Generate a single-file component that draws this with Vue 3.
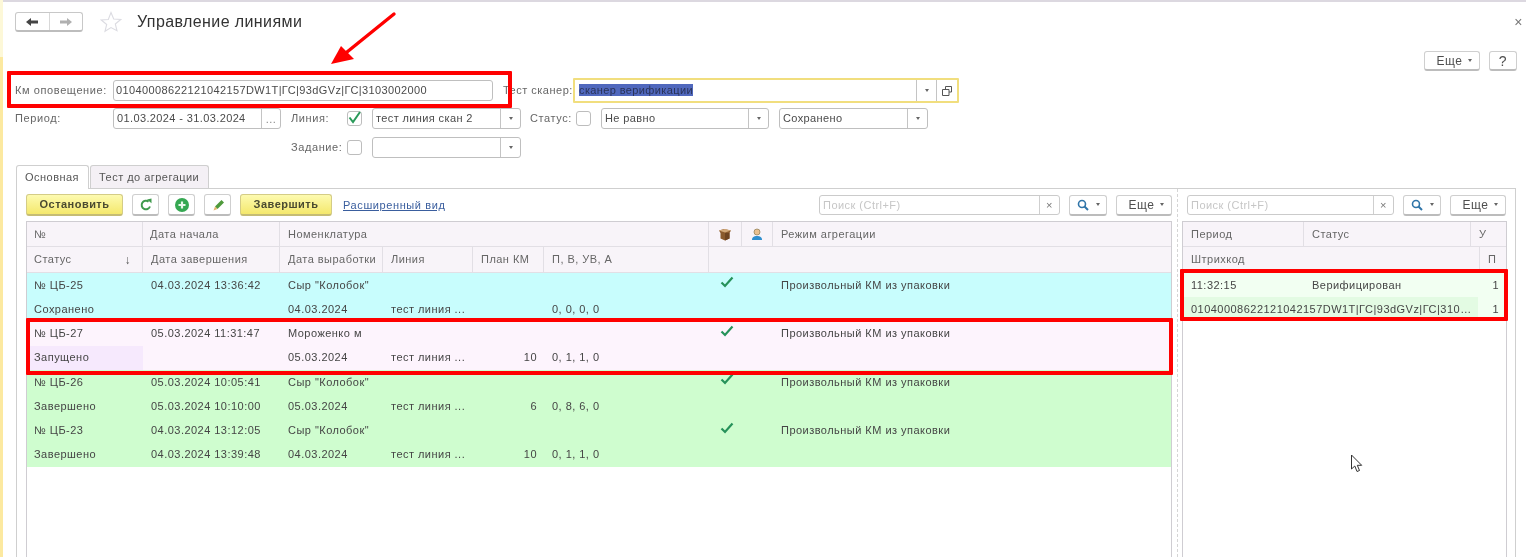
<script setup>
const rows = [
  { cls: 'cyan', num: '№ ЦБ-25', status: 'Сохранено', start: '04.03.2024 13:36:42', end: '', name: 'Сыр "Колобок"', date: '04.03.2024', plan: '', counts: '0, 0, 0, 0' },
  { cls: 'lilac', num: '№ ЦБ-27', status: 'Запущено', start: '05.03.2024 11:31:47', end: '', name: 'Мороженко м', date: '05.03.2024', plan: '10', counts: '0, 1, 1, 0' },
  { cls: 'green', num: '№ ЦБ-26', status: 'Завершено', start: '05.03.2024 10:05:41', end: '05.03.2024 10:10:00', name: 'Сыр "Колобок"', date: '05.03.2024', plan: '6', counts: '0, 8, 6, 0' },
  { cls: 'green', num: '№ ЦБ-23', status: 'Завершено', start: '04.03.2024 13:12:05', end: '04.03.2024 13:39:48', name: 'Сыр "Колобок"', date: '04.03.2024', plan: '10', counts: '0, 1, 1, 0' }
]
</script>

<template>
  <div class="page">
    <div class="topstrip"></div>
    <header class="head">
      <div class="navgroup">
        <span class="navbtn"><svg width="14" height="10" viewBox="0 0 14 10"><path d="M1 5 6 1v2.500h7v3H6V9z" fill="#444"/></svg></span>
        <span class="navbtn"><svg width="14" height="10" viewBox="0 0 14 10"><path d="M13 5 8 1v2.500H1v3h7V9z" fill="#b0b0b0"/></svg></span>
      </div>
      <svg class="star" width="22" height="22" viewBox="0 0 22 22"><path d="M11 1.500l2.700 6.500 7 .5-5.400 4.500 1.700 6.800L11 16.600 5 20.300l1.700-6.800L1.300 9l7-.5z" fill="#fff" stroke="#dcdce2" stroke-width="1.100"/></svg>
      <h1 class="title">Управление линиями</h1>
      <span class="close">×</span>
    </header>

    <div class="cmdbar">
      <button class="btn more-top">Еще <i class="caret"></i></button>
      <button class="btn help">?</button>
    </div>

    <div class="frow r1">
      <label class="lab l-km">Км оповещение:</label>
      <div class="inp w-km">01040008622121042157DW1T|ГС|93dGVz|ГС|3103002000</div>
      <label class="lab l-scan">Тест сканер:</label>
      <div class="inp focus">
        <span class="fieldtext"><span class="sel">сканер верификации</span></span>
        <span class="seg s-drop"><i class="caret"></i></span>
        <span class="seg s-open"><svg width="10" height="10" viewBox="0 0 10 10"><path d="M3.500 3V.5h6v5.500H7M.5 3.500H7v6H.5z" fill="none" stroke="#555"/></svg></span>
      </div>
    </div>

    <div class="frow r2">
      <label class="lab l-km">Период:</label>
      <div class="inp w-period"><span class="fieldtext">01.03.2024 - 31.03.2024</span><span class="seg s-dots">...</span></div>
      <label class="lab l-line">Линия:</label>
      <span class="chk"><svg width="16" height="14" viewBox="0 0 16 14"><path d="M2.500 6.500 6 11l7-10" fill="none" stroke="#2a9a5a" stroke-width="2"/></svg></span>
      <div class="inp w-combo"><span class="fieldtext">тест линия скан 2</span><span class="seg s-drop"><i class="caret"></i></span></div>
      <label class="lab l-status">Статус:</label>
      <span class="chk c-status"></span>
      <div class="inp w-cmb2"><span class="fieldtext">Не равно</span><span class="seg s-drop"><i class="caret"></i></span></div>
      <div class="inp w-cmb2 gap-cmb"><span class="fieldtext">Сохранено</span><span class="seg s-drop"><i class="caret"></i></span></div>
    </div>

    <div class="frow r3">
      <label class="lab l-task">Задание:</label>
      <span class="chk"></span>
      <div class="inp w-combo"><span class="fieldtext"></span><span class="seg s-drop"><i class="caret"></i></span></div>
    </div>

    <div class="tabs">
      <span class="tab active">Основная</span>
      <span class="tab">Тест до агрегации</span>
    </div>

    <section class="panel">
      <div class="leftcol">
        <div class="toolbar">
          <button class="btn yellow b-stop">Остановить</button>
          <button class="btn icon">
            <svg width="14" height="14" viewBox="0 0 14 14"><path d="M11 8.500A4.300 4.300 0 1 1 9.600 3.600" fill="none" stroke="#3f9a4c" stroke-width="2"/><path d="M8 1.500l4.500-1v4.800z" fill="#3f9a4c"/></svg>
          </button>
          <button class="btn icon">
            <svg width="16" height="16" viewBox="0 0 16 16"><circle cx="8" cy="8" r="7" fill="#35a852"/><path d="M8 4.500v7M4.500 8h7" stroke="#e8f8ea" stroke-width="2.200"/></svg>
          </button>
          <button class="btn icon">
            <svg width="14" height="14" viewBox="0 0 14 14"><path d="M4 8.500 10.500 2l2.500 2.500L6.500 11z" fill="#4f9a3c"/><path d="M4 8.500 2.500 12.500 6.500 11z" fill="#e3b56c"/></svg>
          </button>
          <button class="btn yellow b-finish">Завершить</button>
          <a class="link">Расширенный вид</a>
          <span class="spring"></span>
          <div class="search sw-left"><span class="ph">Поиск (Ctrl+F)</span><span class="x">×</span></div>
          <button class="btn find">
            <svg width="12" height="12" viewBox="0 0 12 12"><circle cx="5" cy="5" r="3.500" fill="none" stroke="#2f74a8" stroke-width="1.600"/><path d="M7.500 7.500 11 11" stroke="#2f74a8" stroke-width="2"/></svg><i class="caret"></i>
          </button>
          <button class="btn more">Еще <i class="caret"></i></button>
        </div>

        <div class="table main">
          <div class="hrow hmain">
            <div class="hc c1">№</div>
            <div class="hc c2">Дата начала</div>
            <div class="hc c3">Номенклатура</div>
            <div class="hc c4 ic">
              <svg width="14" height="13" viewBox="0 0 14 13"><path d="M1 2.500 6 1l7 1.500-1.500 2.500v5.500L7 12.500l-4.500-2V5z" fill="#8a5a2c"/><path d="M1 2.500 7 4.500 13 2.500 7 1z" fill="#d2a878"/><path d="M7 5v7.500l4.500-2V5z" fill="#6e4420"/></svg>
            </div>
            <div class="hc c5 ic">
              <svg width="12" height="13" viewBox="0 0 12 13"><circle cx="6" cy="4" r="3" fill="#e9c08f" stroke="#8a7a50" stroke-width=".7"/><path d="M1 12c0-3 2-4 5-4s5 1 5 4z" fill="#2f8fcf"/></svg>
            </div>
            <div class="hc c6">Режим агрегации</div>
          </div>
          <div class="hrow hsub">
            <div class="hc d1">Статус <span class="sort">↓</span></div>
            <div class="hc d2">Дата завершения</div>
            <div class="hc d3">Дата выработки</div>
            <div class="hc d4">Линия</div>
            <div class="hc d5">План КМ</div>
            <div class="hc d6">П, В, УВ, А</div>
            <div class="hc d7"></div>
          </div>
          <div v-for="r in rows" :key="r.num" class="drow" :class="r.cls">
            <div class="dc a1">{{ r.num }}</div>
            <div class="dc a2">{{ r.start }}</div>
            <div class="dc a3">{{ r.name }}</div>
            <div class="dc a4"><svg width="14" height="12" viewBox="0 0 14 12"><path d="M1.500 6.500 5 10 12.500 1.500" fill="none" stroke="#26925a" stroke-width="2.200"/></svg></div>
            <div class="dc a5"></div>
            <div class="dc a6">Произвольный КМ из упаковки</div>
            <div class="dc b1 st">{{ r.status }}</div>
            <div class="dc b2">{{ r.end }}</div>
            <div class="dc b3">{{ r.date }}</div>
            <div class="dc b4">тест линия ...</div>
            <div class="dc b5">{{ r.plan }}</div>
            <div class="dc b6">{{ r.counts }}</div>
            <div class="dc b7"></div>
          </div>
        </div>
      </div>

      <div class="splitter"></div>

      <div class="rightcol">
        <div class="toolbar tb-right">
          <div class="search sw-right"><span class="ph">Поиск (Ctrl+F)</span><span class="x">×</span></div>
          <button class="btn find">
            <svg width="12" height="12" viewBox="0 0 12 12"><circle cx="5" cy="5" r="3.500" fill="none" stroke="#2f74a8" stroke-width="1.600"/><path d="M7.500 7.500 11 11" stroke="#2f74a8" stroke-width="2"/></svg><i class="caret"></i>
          </button>
          <button class="btn more">Еще <i class="caret"></i></button>
        </div>
        <div class="table side">
          <div class="shead s1">
            <div class="hc">Период</div><div class="hc">Статус</div><div class="hc">У</div>
          </div>
          <div class="shead s2">
            <div class="hc">Штрихкод</div><div class="hc">П</div>
          </div>
          <div class="srow r-a">
            <div class="dc">11:32:15</div><div class="dc">Верифицирован</div><div class="dc num">1</div>
          </div>
          <div class="srow r-b">
            <div class="dc code"><span class="codetext">01040008622121042157DW1T|ГС|93dGVz|ГС|310…</span></div><div class="dc num">1</div>
          </div>
        </div>
      </div>
    </section>

    <div class="mark m-km"></div>
    <div class="mark m-row"></div>
    <div class="mark m-side"></div>
    <svg class="arrow" width="70" height="60" viewBox="0 0 70 60"><path d="M65 3 18 41" stroke="#f00" stroke-width="3.400" stroke-linecap="round"/><path d="M2 53 12 35 25 48z" fill="#f00"/></svg>
    <svg class="cursor" width="14" height="20" viewBox="0 0 14 20"><path d="M1.500 1v14l3.300-3 2.200 5.500 2.500-1-2.200-5.200h4.400z" fill="#fff" stroke="#333" stroke-width="1"/></svg>
  </div>
</template>

<style>
html, body { margin: 0; background: #fff; }
</style>

<style scoped>
.page {
  position: relative;
  width: 1526px;
  height: 557px;
  overflow: hidden;
  box-sizing: border-box;
  border-left: 3px solid #fce9a0;
  border-image: linear-gradient(#fdf8d8 58px, #fce9a0 58px) 1;
  background: #fff;
  font: 11px/1 "Liberation Sans", Arial, sans-serif;
  letter-spacing: .47px;
  color: #4e4e4e;
  filter: blur(.4px);
}
.topstrip { height: 2px; background: #dcd8e0; margin-left: -3px; }
.head { display: flex; align-items: center; height: 20px; margin: 10px 0 0 12px; }
.navgroup { display: flex; width: 68px; height: 20px; box-sizing: border-box; border: 1px solid #c8c8c8; border-bottom: 2px solid #bdbdbd; border-radius: 3px; }
.navbtn { flex: 1; display: flex; align-items: center; justify-content: center; }
.navbtn + .navbtn { border-left: 1px solid #d8d8d8; }
.star { margin-left: 17px; }
.title { margin: 0 0 0 15px; font: 400 16px/20px "Liberation Sans", Arial, sans-serif; letter-spacing: .4px; color: #333; }
.close { margin-left: auto; margin-right: 3px; font-size: 14px; color: #777; }

.cmdbar { display: flex; justify-content: flex-end; gap: 9px; height: 20px; margin: 19px 9px 0 0; }
.btn {
  box-sizing: border-box; height: 20px; padding: 0; display: inline-flex; align-items: center; justify-content: center;
  background: #fff; border: 1px solid #cfcfcf; border-bottom: 2px solid #bcbcbc; border-radius: 3px;
  font: inherit; letter-spacing: inherit; color: #4e4e4e;
}
.more-top, .more { font-size: 12px; padding-left: 5px; }
.more-top { width: 56px; gap: 6px; }
.help { width: 28px; font-size: 14px; }
.caret { display: inline-block; width: 0; height: 0; border: 2.500px solid transparent; border-top: 3px solid #666; border-bottom: 0; }

.frow { display: flex; align-items: center; }
.r1 { height: 25px; margin-top: 7px; }
.r2 { height: 21px; margin-top: 5px; }
.r3 { height: 21px; margin-top: 8px; padding-left: 288px; }
.lab { color: #666; white-space: nowrap; flex: none; letter-spacing: .6px; }
.l-km { width: 98px; margin-left: 12px; }
.l-scan { width: 70px; margin-left: 10px; letter-spacing: .5px; }
.l-line { width: 56px; margin-left: 10px; }
.l-status { width: 46px; margin-left: 9px; }
.l-task { width: 56px; }
.inp {
  box-sizing: border-box; height: 21px; display: flex; align-items: center; flex: none;
  border: 1px solid #bfbfbf; border-radius: 3px; padding-left: 2px; background: #fff; color: #4a4a4a; white-space: nowrap; letter-spacing: .38px;
}
.w-km { width: 380px; }
.focus { width: 386px; height: 25px; border: 2px solid #f1de7e; border-radius: 1px; }
.w-period { width: 168px; }
.w-combo { width: 149px; }
.w-cmb2 { width: 168px; margin-left: 0; }
.w-cmb2:last-child { width: 149px; }
.gap-cmb { margin-left: 10px; }
.fieldtext { flex: 1; padding-left: 1px; min-width: 0; }
.focus .fieldtext { padding-left: 2px; }
.sel { background: #5068bd; color: #2a3358; }
.seg { flex: none; height: 100%; display: flex; align-items: center; justify-content: center; border-left: 1px solid #c4c4c4; }
.s-drop { width: 19px; }
.s-open { width: 20px; }
.s-dots { width: 19px; color: #888; align-items: flex-end; padding-bottom: 3px; box-sizing: border-box; }
.chk { box-sizing: border-box; width: 15px; height: 15px; margin-right: 10px; flex: none; border: 1px solid #bdbdbd; border-radius: 3px; display: flex; align-items: center; justify-content: center; }
.chk svg { flex: none; margin-top: -2px; }
.c-status { margin-right: 10px; }

.tabs { display: flex; gap: 1px; height: 23px; margin: 7px 0 0 13px; }
.tab { box-sizing: border-box; height: 23px; padding: 0 8px; display: flex; align-items: center; white-space: nowrap; border: 1px solid #cfcfcf; border-bottom: 0; border-radius: 3px 3px 0 0; background: #f4f0f5; color: #555; }
.tab.active { width: 73px; background: #fff; height: 24px; position: relative; z-index: 1; }
.tab:not(.active) { width: 119px; }

.panel { display: flex; box-sizing: border-box; width: 1500px; height: 369px; margin-left: 13px; padding-left: 9px; border: 1px solid #cfcfcf; border-bottom: 0; }
.leftcol { width: 1146px; flex: none; }
.rightcol { width: 325px; flex: none; }
.splitter { width: 0; margin-left: 5px; margin-right: 4px; border-left: 1px dashed #d5d5d5; }
.toolbar { display: flex; align-items: center; gap: 9px; height: 32px; }
.yellow { height: 22px; background: linear-gradient(#fdfab0, #f4e86c); border-color: #d4cc86; border-bottom-color: #c5bc74; font-weight: 700; color: #4a4a30; }
.b-stop { width: 97px; }
.b-finish { width: 92px; }
.icon { width: 27px; height: 22px; }
.link { margin-left: 2px; color: #3a5e9e; text-decoration: underline; width: 102px; white-space: nowrap; letter-spacing: .6px; }
.spring { flex: 1; }
.search { box-sizing: border-box; display: flex; align-items: center; height: 20px; border: 1px solid #cbcbcb; border-radius: 3px; padding-left: 3px; }
.sw-left { width: 241px; }
.sw-right { width: 207px; margin-left: 5px; }
.ph { flex: 1; color: #c6c6c6; white-space: nowrap; }
.x { width: 19px; height: 100%; display: flex; align-items: center; justify-content: center; border-left: 1px solid #cfcfcf; color: #777; }
.find { width: 38px; gap: 7px; height: 21px; }
.more { width: 56px; gap: 6px; height: 21px; }
.tb-right { justify-content: flex-start; }

.table { box-sizing: border-box; height: 337px; border: 1px solid #cfcdd2; border-bottom: 0; overflow: hidden; }
.hrow, .drow { display: grid; grid-template-columns: 116px 137px 103px 90px 71px 165px 33px 31px 1fr; }
.hc { box-sizing: border-box; display: flex; align-items: center; padding-left: 7px; background: #f8f4f9; color: #666; border-right: 1px solid #e2dfe5; border-bottom: 1px solid #e2dfe5; white-space: nowrap; }
.hmain .hc { height: 25px; }
.hsub .hc { height: 26px; }
.c1 { grid-column: 1; } .c2 { grid-column: 2; }
.c3 { grid-column: 3 / span 4; padding-left: 8px; }
.c4 { grid-column: 7; } .c5 { grid-column: 8; }
.c6 { grid-column: 9; border-right: 0; padding-left: 8px; }
.ic { justify-content: center; padding-left: 0; }
.d1 { position: relative; }
.sort { position: absolute; right: 11px; color: #555; font-size: 12px; }
.d2, .d3, .d4, .d5, .d6 { padding-left: 8px; }
.d6 { grid-column: 6; }
.d7 { grid-column: 7 / -1; border-right: 0; }
.drow { grid-template-rows: 24.250px 24.250px; align-items: stretch; }
.dc { box-sizing: border-box; display: flex; align-items: center; padding-left: 8px; white-space: nowrap; overflow: hidden; color: #454545; }
.a1, .b1 { padding-left: 7px; }
.a3 { grid-column: 3 / span 4; }
.a4 { grid-column: 7; padding: 0 0 6px 11px; }
.a5 { grid-column: 8; }
.a6 { grid-column: 9; padding-left: 8px; }
.b1 { grid-column: 1; }
.b5 { justify-content: flex-end; padding: 0 7px 0 0; }
.b7 { grid-column: 7 / -1; }
.cyan { background: #c8fdfd; }
.lilac { background: #fdf4fd; }
.lilac .st { background: #f6e9fd; }
.green { background: #cffdcf; }

.s1, .s2, .srow { display: grid; }
.s1 { grid-template-columns: 121px 167px 1fr; }
.s2 { grid-template-columns: 297px 1fr; }
.s1 .hc { height: 25px; padding-left: 8px; }
.s2 .hc { height: 26px; padding-left: 8px; }
.s1 .hc:last-child, .s2 .hc:last-child { border-right: 0; }
.srow { height: 24px; }
.r-a { grid-template-columns: 121px 167px 1fr; background: #f2fff2; }
.r-b { grid-template-columns: 295px 1fr; background: #f2fff2; }
.r-b .code { background: #e3fbe3; }
.num { justify-content: flex-end; padding: 0 7px 0 0; }

.mark { position: absolute; box-sizing: border-box; border: 4px solid #f00; border-radius: 1px; }
.m-km { left: 4px; top: 71px; width: 505px; height: 37px; }
.m-row { left: 23px; top: 318px; width: 1147px; height: 57px; }
.m-side { left: 1177px; top: 269px; width: 328px; height: 52px; }
.arrow { position: absolute; left: 326px; top: 11px; }
.cursor { position: absolute; left: 1347px; top: 454px; }
</style>
